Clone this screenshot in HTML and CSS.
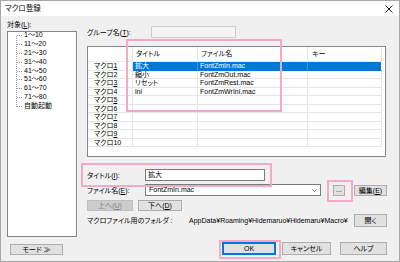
FILE: index.html
```html
<!DOCTYPE html>
<html lang="ja">
<head>
<meta charset="utf-8">
<title>マクロ登録</title>
<link rel="stylesheet" href="styles.css">
</head>
<body>
<div class="window">
  <div class="titlebar">
    <span class="title">マクロ登録</span>
    <svg class="close" width="8" height="8" viewBox="0 0 8 8"><path d="M0.5 0.5L7.5 7.5M7.5 0.5L0.5 7.5" stroke="#000" stroke-width="0.9" fill="none"/></svg>
  </div>
  <div class="body">
    <div class="left">
      <div class="lbl">対象(<u>L</u>):</div>
      <div class="tree">
        <ul class="tree-list">
          <li><span class="branch"></span>1～10</li>
          <li><span class="branch"></span>11～20</li>
          <li><span class="branch"></span>21～30</li>
          <li><span class="branch"></span>31～40</li>
          <li><span class="branch"></span>41～50</li>
          <li><span class="branch"></span>51～60</li>
          <li><span class="branch"></span>61～70</li>
          <li><span class="branch"></span>71～80</li>
          <li><span class="branch"></span>自動起動</li>
        </ul>
      </div>
    </div>
    <div class="right">
      <div class="group-row">
        <span class="group-lbl">グループ名(<u>T</u>):</span>
        <div class="group-input"></div>
      </div>
      <div class="list">
        <div class="lrow head">
          <div class="c c0"></div><div class="c c1">タイトル</div><div class="c c2">ファイル名</div><div class="c c3">キー</div>
        </div>
        <div class="lrow sel">
          <div class="c c0">マクロ<u>1</u></div><div class="c c1">拡大</div><div class="c c2">FontZmIn.mac</div><div class="c c3"></div>
        </div>
        <div class="lrow">
          <div class="c c0">マクロ<u>2</u></div><div class="c c1">縮小</div><div class="c c2">FontZmOut.mac</div><div class="c c3"></div>
        </div>
        <div class="lrow">
          <div class="c c0">マクロ<u>3</u></div><div class="c c1">リセット</div><div class="c c2">FontZmRest.mac</div><div class="c c3"></div>
        </div>
        <div class="lrow">
          <div class="c c0">マクロ<u>4</u></div><div class="c c1">ini</div><div class="c c2">FontZmWrIni.mac</div><div class="c c3"></div>
        </div>
        <div class="lrow">
          <div class="c c0">マクロ<u>5</u></div><div class="c c1"></div><div class="c c2"></div><div class="c c3"></div>
        </div>
        <div class="lrow">
          <div class="c c0">マクロ<u>6</u></div><div class="c c1"></div><div class="c c2"></div><div class="c c3"></div>
        </div>
        <div class="lrow">
          <div class="c c0">マクロ<u>7</u></div><div class="c c1"></div><div class="c c2"></div><div class="c c3"></div>
        </div>
        <div class="lrow">
          <div class="c c0">マクロ<u>8</u></div><div class="c c1"></div><div class="c c2"></div><div class="c c3"></div>
        </div>
        <div class="lrow">
          <div class="c c0">マクロ<u>9</u></div><div class="c c1"></div><div class="c c2"></div><div class="c c3"></div>
        </div>
        <div class="lrow">
          <div class="c c0">マクロ1<u>0</u></div><div class="c c1"></div><div class="c c2"></div><div class="c c3"></div>
        </div>
      </div>
      <div class="mark mark-list"></div>
      <div class="title-row">
        <span class="field-lbl">タイトル(<u>I</u>):</span>
        <div class="edit">拡大</div>
      </div>
      <div class="file-row">
        <span class="field-lbl">ファイル名(<u>E</u>):</span>
        <div class="combo">
          <span class="combo-text">FontZmIn.mac</span>
          <svg class="combo-arrow" width="5" height="3" viewBox="0 0 5 3"><path d="M0.3 0.3L2.5 2.5L4.7 0.3" stroke="#555" stroke-width="0.8" fill="none"/></svg>
        </div>
        <div class="btn dots">...</div>
        <div class="btn edit-btn">編集(<u>E</u>)</div>
      </div>
      <div class="move-row">
        <div class="btn up disabled">上へ(<u>U</u>)</div>
        <div class="btn down">下へ(<u>D</u>)</div>
      </div>
      <div class="folder-row">
        <span class="folder-lbl">マクロファイル用のフォルダ :</span>
        <span class="path">AppData¥Roaming¥Hidemaruo¥Hidemaru¥Macro¥</span>
        <div class="btn open-btn">開く</div>
      </div>
    </div>
  </div>
  <div class="footer">
    <div class="btn mode">モード ≫</div>
    <div class="footer-right">
      <div class="btn ok">OK</div>
      <div class="btn cancel">キャンセル</div>
      <div class="btn help">ヘルプ</div>
    </div>
  </div>
</div>
</body>
</html>
```
FILE: styles.css
```css
* { box-sizing: border-box; }
html, body { margin: 0; padding: 0; background: #ffffff; }
body {
  font-family: "Liberation Sans", "Noto Sans CJK JP", sans-serif;
  font-size: 7px;
  color: #000;
  font-feature-settings: "palt";
}
u { text-decoration-thickness: 0.6px; text-underline-offset: 1px; }

.window {
  width: 400px;
  height: 262px;
  border: 1px solid #a8a8a8;
  background: #f0f0f0;
  display: flex;
  flex-direction: column;
}

.titlebar {
  height: 15px;
  background: #ffffff;
  display: flex;
  align-items: center;
  justify-content: space-between;
  padding: 0 6px 0 4px;
  flex: none;
}
.title { line-height: 9px; font-size: 7.5px; }
.close { display: block; }

.body {
  display: grid;
  grid-template-columns: 70px 300px;
  column-gap: 10px;
  padding-left: 6px;
  height: 221px;
  flex: none;
}

.left {
  display: flex;
  flex-direction: column;
  padding-top: 4px;
}
.lbl { line-height: 9px; height: 9px; }
.tree {
  margin-top: 2px;
  flex: 1;
  background: #fff;
  border: 1px solid #828790;
  overflow: hidden;
}
.tree-list {
  list-style: none;
  margin: -1px 0 0 0;
  padding: 0 0 0 9px;
  background: repeating-linear-gradient(to bottom, #9a9a9a 0 1px, transparent 1px 2px) no-repeat 8px 5px / 1px 72px;
}
.tree-list li {
  line-height: 8.9px;
  height: 8.9px;
  display: flex;
  align-items: center;
  white-space: nowrap;
}
.branch {
  width: 5px;
  height: 1px;
  margin-right: 2px;
  background: repeating-linear-gradient(to right, #9a9a9a 0 1px, transparent 1px 2px);
  flex: none;
}

.right {
  position: relative;
  padding-top: 10px;
}

.group-row {
  display: flex;
  align-items: center;
  height: 12px;
}
.group-lbl { width: 64px; line-height: 9px; }
.group-input {
  width: 85px;
  height: 12px;
  background: #f4f4f4;
  border: 1px solid #cccccc;
}

.list {
  margin-top: 8px;
  width: 299px;
  height: 111px;
  background: #fff;
  border: 1px solid #828790;
}
.lrow {
  display: grid;
  grid-template-columns: 45px 65px 110px 74px;
  height: 8.5px;
  line-height: 8.5px;
}
.lrow.head { height: 15px; line-height: 14px; }
.c {
  border-right: 1px solid #e4e4e4;
  border-bottom: 1px solid #e4e4e4;
  white-space: nowrap;
  overflow: hidden;
  padding-left: 2px;
}
.head .c { border-bottom: 1px solid #ececec; padding-left: 3px; }
.head .c3 { padding-left: 4px; }
.c0 { padding-left: 6px; }
.head .c0 { padding-left: 0; }
.sel .c1, .sel .c2, .sel .c3 {
  background: #0078d7;
  color: #fff;
  border-bottom-color: #0078d7;
}
.sel .c1, .sel .c2 { border-right-color: #3d95de; }
.sel .c3 { border-right-color: #fff; }

.mark {
  position: absolute;
  border: 2px solid #f5a9c8;
  pointer-events: none;
}
.mark-list { left: 39px; top: 23px; width: 156px; height: 73px; }

.title-row {
  position: relative;
  margin-top: 12px;
  display: flex;
  align-items: center;
  width: 178px;
  height: 12px;
}
.title-row::after {
  content: "";
  position: absolute;
  left: -6px; top: -6px; right: -7px; bottom: -6px;
  border: 2px solid #f5a9c8;
}
.field-lbl { width: 58px; line-height: 9px; white-space: nowrap; }
.edit {
  width: 120px;
  height: 12px;
  background: #fff;
  border: 1px solid #7a7a7a;
  padding-left: 2px;
  line-height: 10px;
}

.file-row {
  margin-top: 3px;
  display: flex;
  align-items: center;
  height: 12px;
}
.combo {
  width: 176px;
  height: 12px;
  background: #fff;
  border: 1px solid #7a7a7a;
  display: flex;
  align-items: center;
  justify-content: space-between;
  padding: 0 3px 0 3px;
}
.combo-text { line-height: 10px; }
.combo-arrow { display: block; }

.btn {
  background: #e1e1e1;
  border: 1px solid #adadad;
  display: flex;
  align-items: center;
  justify-content: center;
  white-space: nowrap;
  line-height: 9px;
}
.dots {
  position: relative;
  margin-left: 12px;
  width: 12px;
  height: 11px;
  line-height: 6px;
  align-items: flex-end;
  padding-bottom: 2px;
}
.dots::after {
  content: "";
  position: absolute;
  left: -7px; top: -6px; right: -9px; bottom: -7px;
  border: 2px solid #f5a9c8;
}
.edit-btn { margin-left: 9px; width: 33px; height: 11px; }

.move-row {
  margin-top: 4px;
  display: flex;
  gap: 5px;
}
.up, .down { height: 11px; }
.up { width: 46px; }
.down { width: 44px; }
.disabled { background: #cccccc; border-color: #bfbfbf; color: #838383; }

.folder-row {
  margin-top: 2px;
  display: flex;
  align-items: center;
  height: 14px;
}
.folder-lbl { width: 102px; white-space: nowrap; line-height: 9px; }
.path { width: 165px; white-space: nowrap; line-height: 9px; }
.open-btn { width: 33px; height: 13px; }

.footer {
  flex: 1;
  display: flex;
  align-items: flex-start;
  justify-content: space-between;
  padding: 5px 12px 0 9px;
}
.mode { margin-top: 2px; width: 53px; height: 11px; }
.footer-right { display: flex; }
.ok {
  position: relative;
  width: 54px;
  height: 13px;
  border: 2px solid #0078d7;
}
.ok::after {
  content: "";
  position: absolute;
  left: -5px; top: -4px; right: -7px; bottom: -6px;
  border: 2px solid #f5a9c8;
}
.cancel { margin-left: 6px; width: 49px; height: 13px; }
.help { margin-left: 9px; width: 47px; height: 13px; }
```
